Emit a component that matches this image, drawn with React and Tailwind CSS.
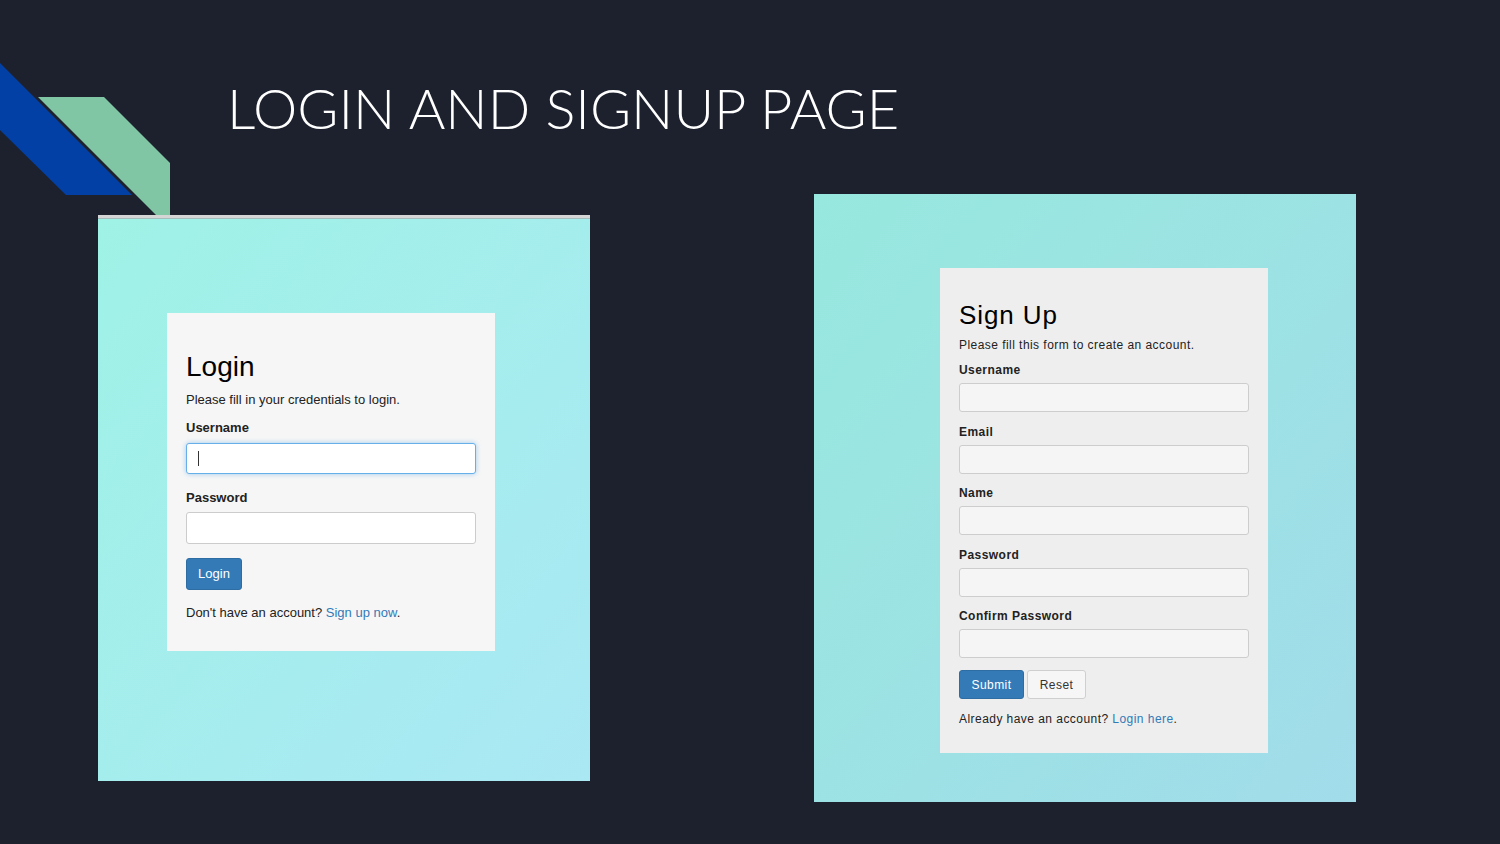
export default function App() {
  return (
    <div className="relative w-[1500px] h-[844px] overflow-hidden bg-[#1c212d] font-['Liberation_Sans',Arial,sans-serif]">
      {/* corner decoration */}
      <svg className="absolute left-0 top-0" width="180" height="216" viewBox="0 0 180 216">
        <polygon points="0,63 132,195 66,195 0,130" fill="#0240a6" />
        <polygon points="38,97 104,97 170,163 170,216 157,216" fill="#80c6a5" />
      </svg>

      <h1 className="pl-[227px] pt-[79px] h-[194px] text-[56px] leading-[58px] font-light text-white font-['Lato','Open_Sans',sans-serif]">
        LOGIN AND SIGNUP PAGE
      </h1>

      <div className="flex items-start">
        {/* login panel */}
        <div className="relative z-10 ml-[98px] mt-[21px] w-[492px] h-[566px] bg-gradient-to-br from-[#9ff2e6] to-[#aae8f4]">
          <div className="h-[3px] bg-[#d5d5d5]" />
          <div className="h-[1px] bg-[#a7bdbb]" />
          <div className="pl-[69px] pt-[94px]">
            <div className="w-[328px] bg-[#f6f6f6] px-[19px] pt-[38px] pb-[30px] text-[#222]">
              <h2 className="text-[28px] leading-[32px] text-black">Login</h2>
              <p className="mt-[9px] text-[13px] leading-[16px]">Please fill in your credentials to login.</p>
              <div className="mt-[12px] text-[13px] leading-[16px] font-bold">Username</div>
              <div className="mt-[7px] h-[31px] rounded-[3px] border border-[#66afe9] bg-white shadow-[0_0_5px_rgba(102,175,233,0.6)] flex items-center pl-[11px]">
                <span className="w-px h-[15px] bg-[#333]" />
              </div>
              <div className="mt-[16px] text-[13px] leading-[16px] font-bold">Password</div>
              <div className="mt-[6px] h-[32px] rounded-[3px] border border-[#ccc] bg-white" />
              <button className="mt-[14px] h-[32px] w-[56px] rounded-[3px] border border-[#2e6da4] bg-[#337ab7] text-[13px] text-white">
                Login
              </button>
              <p className="mt-[15px] text-[13px] leading-[16px]">
                Don't have an account? <span className="text-[#337ab7]">Sign up now</span>.
              </p>
            </div>
          </div>
        </div>

        {/* signup panel */}
        <div className="ml-[224px] w-[542px] h-[608px] bg-gradient-to-br from-[#97e8de] to-[#a1dcea] pl-[126px] pt-[74px]">
          <div className="w-[328px] bg-[#eeeeee] px-[19px] pt-[32px] pb-[27px] text-[#222] tracking-[0.45px]">
            <h2 className="text-[26px] leading-[30px] tracking-[0.9px] text-black">Sign Up</h2>
            <p className="mt-[8px] text-[12px] leading-[14px]">Please fill this form to create an account.</p>
            {['Username', 'Email', 'Name', 'Password', 'Confirm Password'].map((label, i) => (
              <div key={label} className={i === 0 ? 'mt-[11px]' : 'mt-[12.5px]'}>
                <div className="text-[12px] leading-[14px] font-bold">{label}</div>
                <div className="mt-[6px] h-[29px] rounded-[3px] border border-[#cdcdcd] bg-[#f5f5f5]" />
              </div>
            ))}
            <div className="mt-[12px] flex gap-[3px]">
              <button className="h-[29px] w-[65px] rounded-[3px] border border-[#2e6da4] bg-[#337ab7] text-[12px] text-white">
                Submit
              </button>
              <button className="h-[29px] w-[59px] rounded-[3px] border border-[#cfcfcf] bg-[#f6f6f6] text-[12px] text-[#333]">
                Reset
              </button>
            </div>
            <p className="mt-[13px] text-[12px] leading-[14px]">
              Already have an account? <span className="text-[#337ab7]">Login here</span>.
            </p>
          </div>
        </div>
      </div>
    </div>
  );
}
